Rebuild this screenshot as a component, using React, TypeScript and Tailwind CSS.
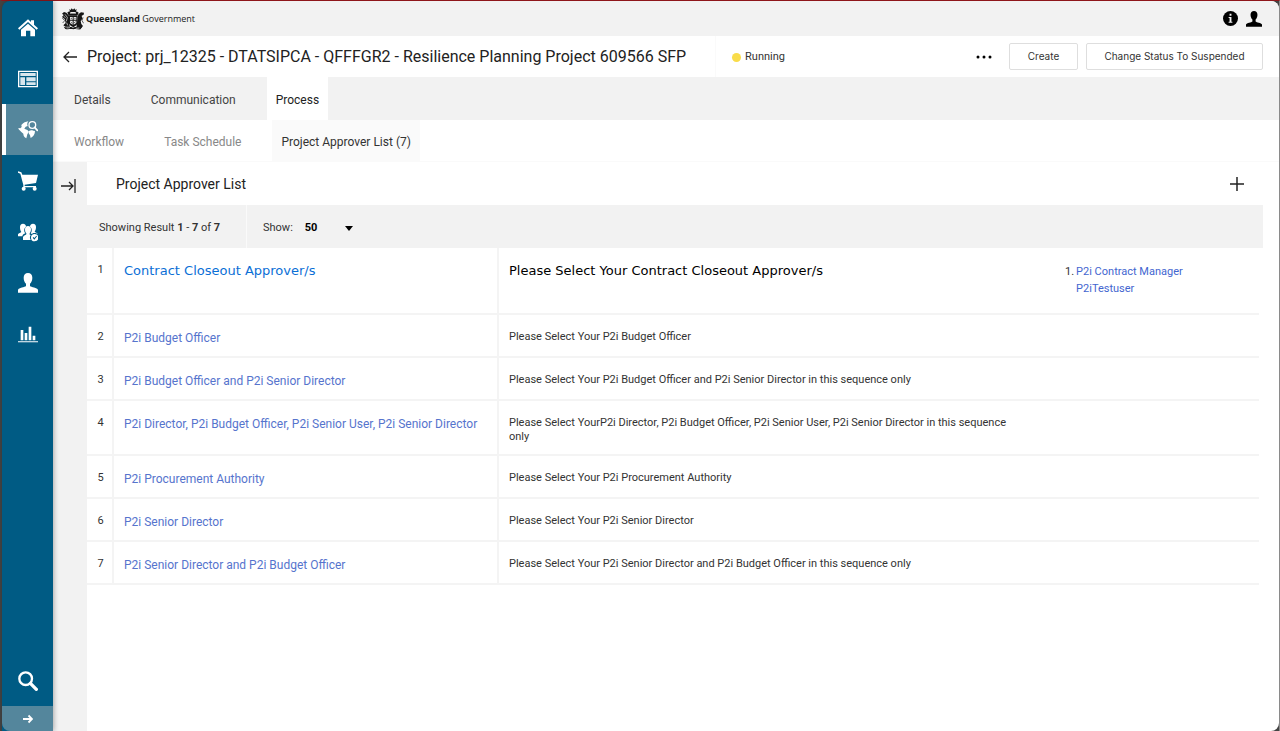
import { useState } from 'react';
import type { ReactNode } from 'react';

type Approver = {
  name: string;
  description: string;
  members?: string[];
};

const approvers: Approver[] = [
  {
    name: 'Contract Closeout Approver/s',
    description: 'Please Select Your Contract Closeout Approver/s',
    members: ['P2i Contract Manager', 'P2iTestuser'],
  },
  { name: 'P2i Budget Officer', description: 'Please Select Your P2i Budget Officer' },
  {
    name: 'P2i Budget Officer and P2i Senior Director',
    description: 'Please Select Your P2i Budget Officer and P2i Senior Director in this sequence only',
  },
  {
    name: 'P2i Director, P2i Budget Officer, P2i Senior User, P2i Senior Director',
    description:
      'Please Select YourP2i Director, P2i Budget Officer, P2i Senior User, P2i Senior Director in this sequence only',
  },
  { name: 'P2i Procurement Authority', description: 'Please Select Your P2i Procurement Authority' },
  { name: 'P2i Senior Director', description: 'Please Select Your P2i Senior Director' },
  {
    name: 'P2i Senior Director and P2i Budget Officer',
    description: 'Please Select Your P2i Senior Director and P2i Budget Officer in this sequence only',
  },
];

function Glyph({ children }: { children: ReactNode }) {
  return (
    <svg viewBox="0 0 60 60" className="size-5" fill="currentColor" aria-hidden="true">
      {children}
    </svg>
  );
}

function PersonShape() {
  return (
    <path d="M30 0c8 0 13 6 13 14 0 8-3 14-7 18v7c3 4 22 4 24 12v8H0v-8c2-8 21-8 24-12v-7c-4-4-7-10-7-18C17 6 22 0 30 0z" />
  );
}

const navItems = [
  {
    label: 'Home',
    icon: (
      <Glyph>
        <path d="M30 4l9 8V7h9v13l12 11-4 4L30 12 4 35l-4-4z" />
        <path d="M30 17l21 18v20H37V38H24v17H9V35z" />
      </Glyph>
    ),
  },
  {
    label: 'Dashboard',
    icon: (
      <Glyph>
        <path fillRule="evenodd" d="M0 5h60v50H0zM4 9v42h52V9z" />
        <path d="M7 12h46v9H7zM7 25h14v23H7zM25 25h28v12H25zM25 40h28v8H25z" opacity="0.85" />
      </Glyph>
    ),
  },
  {
    label: 'Projects',
    icon: (
      <Glyph>
        <path d="M10 15C16 8 23 5 31 4c-4 5-4 9-2 14l-6 2-4 6 9 4 5 5-5 8-3 12c-6-3-9-8-9-14l-6-5-8-8-1-4 6 1 4-4z" />
        <path d="M33 33c5-3 8-3 13-1l5 1c0 10-5 17-13 21l-2-8-4-6z" />
        <circle cx="43" cy="15" r="10" fill="none" stroke="currentColor" strokeWidth="4" />
        <path d="M50 22l8 9" stroke="currentColor" strokeWidth="5" strokeLinecap="round" />
      </Glyph>
    ),
  },
  {
    label: 'Cart',
    icon: (
      <Glyph>
        <path d="M0 1l10 3 3 7h47l-6 25-34 5v4h34v4H16v-7L7 8 0 5z" />
        <circle cx="17" cy="53" r="6" />
        <circle cx="50" cy="53" r="6" />
      </Glyph>
    ),
  },
  {
    label: 'Teams',
    icon: (
      <Glyph>
        <path d="M15 5c6 0 9 4 9 9-6 3-7 14-2 20-4 2-8 3-9 9H0v-6c2-4 8-4 10-7-3-4-4-9-4-15 0-6 3-10 9-10zM45 5c6 0 9 4 9 10 0 5-1 10-4 14 2 3 8 3 10 8l-7-4c-6-1-9 0-12 3l-3-2c5-6 4-17-2-20 0-5 3-9 9-9z" />
        <path d="M30 12c6 0 9 4 9 10 0 6-2 9-4 12v4l3 1c-3 5-3 10 0 15H15v-9c2-5 9-5 10-8v-3c-3-3-4-6-4-12 0-6 3-10 9-10z" />
        <path fillRule="evenodd" d="M50 36a11 11 0 100 22 11 11 0 000-22zm-6 11l3-2 2 3 6-7 2 2-8 10z" />
      </Glyph>
    ),
  },
  {
    label: 'Contacts',
    icon: (
      <Glyph>
        <PersonShape />
      </Glyph>
    ),
  },
  {
    label: 'Reports',
    icon: (
      <Glyph>
        <path d="M0 52h60v3H0zM8 18h8v31H8zM20 27h8v22h-8zM32 8h8v41h-8zM44 35h8v14h-8z" />
      </Glyph>
    ),
  },
];

function Crest() {
  return (
    <svg viewBox="0 0 66 66" className="size-[22px]" aria-hidden="true">
      <g fill="#161616">
        <path d="M22 3l4 3 3-5 4 4 4-4 3 5 4-3-2 9H24z" />
        <path d="M16 13l7-3 3 5h14l4-5 6 4-4 9H20z" />
        <path d="M0 17l6-5 7 2 6 7 3 5-1 22 3 8H10l-6-4 7-7-3-12-8-6 5-6z" />
        <path d="M47 29l2-10 8-6 9 1-1 6-6 3 2 9-5 7 2 9 5 6-5 6H43z" />
        <path fillRule="evenodd" d="M20 23h27v20c0 8-7 11-13 15-7-4-14-7-14-15zm4 4v8h8v-8zm11 0v8h8v-8zm-11 11v7l8 5V38zm11 0v12l8-5v-7z" />
        <path d="M5 56c10 4 18-1 28 3 10-4 17 0 27-3l-4 8c-8 1-14-2-22 0-9-2-15 1-24-1z" />
      </g>
      <g fill="none" stroke="#161616" strokeWidth="2">
        <path d="M26 31h4M37 31h4M26 42l5 4M36 45l5-4M1 30l7 8-6 7M63 28l-3 10 5 8" />
      </g>
      <g fill="none" stroke="#f2f2f2" strokeWidth="2">
        <path d="M24 16h18M9 19l7 9-3 12M5 25l6 4M14 60l10-1M41 61l11-1M14 44l3 8" />
      </g>
    </svg>
  );
}

function Sidebar() {
  const [active, setActive] = useState('Projects');

  return (
    <nav
      aria-label="Main"
      className="relative z-10 flex w-[51px] shrink-0 flex-col rounded-tl-lg bg-[#005b84] pt-px text-white shadow-[1px_0_5px_rgba(0,0,0,0.3)]"
    >
      {navItems.map(item => (
        <button
          key={item.label}
          aria-label={item.label}
          onClick={() => setActive(item.label)}
          className={
            active === item.label
              ? 'flex h-[51px] items-center justify-center border-l-4 border-white bg-[#54869c] pr-1'
              : 'flex h-[51px] items-center justify-center'
          }
        >
          {item.icon}
        </button>
      ))}
      <button aria-label="Search" className="mt-auto flex h-[51px] items-center justify-center">
        <svg viewBox="0 0 60 60" className="size-5" fill="none" stroke="currentColor" aria-hidden="true">
          <circle cx="23" cy="23" r="19" strokeWidth="7" />
          <path d="M38 38l17 17" strokeWidth="10" strokeLinecap="round" />
        </svg>
      </button>
      <button aria-label="Expand menu" className="flex h-[25px] items-center justify-center rounded-bl-lg bg-[#54869c]">
        <svg viewBox="0 0 10 10" className="size-[10px]" fill="none" stroke="currentColor" strokeWidth="1.8" aria-hidden="true">
          <path d="M0 5h9M5.500 1.500L9 5 5.500 8.500" />
        </svg>
      </button>
    </nav>
  );
}

function TopBar() {
  return (
    <header className="flex h-[35px] items-center justify-between bg-[#f2f2f2] pr-[17px] pl-[9px]">
      <div className="flex items-center gap-0.5 text-[#1a1a1a]">
        <Crest />
        <p className="font-['Open_Sans'] text-[9px]">
          <b>Queensland</b> Government
        </p>
      </div>
      <div className="flex items-center gap-2 text-black">
        <button aria-label="Information">
          <svg viewBox="0 0 16 16" className="size-[15px]" aria-hidden="true">
            <circle cx="8" cy="8" r="8" fill="currentColor" />
            <path d="M7 3h2v2H7zM6 6.500h3v5h1v1H6v-1h1v-4H6z" fill="#f2f2f2" />
          </svg>
        </button>
        <button aria-label="Account">
          <svg viewBox="0 0 60 60" className="size-4" fill="currentColor" aria-hidden="true">
            <PersonShape />
          </svg>
        </button>
      </div>
    </header>
  );
}

function TitleBar() {
  return (
    <div className="flex h-[41px] items-center bg-white pr-4 pl-[10px]">
      <button aria-label="Back" className="mr-[10px]">
        <svg viewBox="0 0 14 12" className="h-3 w-[14px]" fill="none" stroke="#222" strokeWidth="1.3" aria-hidden="true">
          <path d="M14 6H1M6 1L1 6l5 5" />
        </svg>
      </button>
      <h1 className="text-base text-[#222]">
        Project: prj_12325 - DTATSIPCA - QFFFGR2 - Resilience Planning Project 609566 SFP
      </h1>
      <div className="ml-[29px] flex h-full items-center gap-1 border-l border-[#fafafa] pt-0.5 pl-4 text-[11px] text-[#333]">
        <span className="size-[9px] rounded-full bg-[#f9dc4a]" />
        Running
      </div>
      <div className="ml-auto flex items-center gap-2 font-[Inter] text-[10px] text-[#333]">
        <button aria-label="More actions" className="mr-2 text-black">
          <svg viewBox="0 0 18 4" className="h-1 w-[18px]" fill="currentColor" aria-hidden="true">
            <circle cx="3" cy="2" r="1.500" />
            <circle cx="9" cy="2" r="1.500" />
            <circle cx="15" cy="2" r="1.500" />
          </svg>
        </button>
        <button className="h-[27px] w-[69px] rounded-xs border border-[#dedede]">Create</button>
        <button className="h-[27px] w-[177px] rounded-xs border border-[#dedede]">Change Status To Suspended</button>
      </div>
    </div>
  );
}

function Tabs() {
  return (
    <>
      <nav aria-label="Project sections" className="flex h-[43px] gap-[22px] bg-[#f2f2f2] pl-3 text-xs text-[#444]">
        <a href="#details" className="flex items-center px-[9px] pt-0.5">Details</a>
        <a href="#communication" className="flex items-center px-[9px] pt-0.5">Communication</a>
        <a href="#process" aria-current="page" className="flex items-center bg-white px-[9px] pt-0.5 text-[#222]">Process</a>
      </nav>
      <nav aria-label="Process sections" className="flex h-[42px] gap-[22px] border-b border-[#fafafa] bg-white pl-3 text-xs text-[#888]">
        <a href="#workflow" className="flex items-center px-[9px] pt-0.5">Workflow</a>
        <a href="#task-schedule" className="flex items-center px-[9px] pt-0.5">Task Schedule</a>
        <a href="#approvers" aria-current="page" className="flex items-center bg-[#fafafa] px-[9px] pt-0.5 text-[#333]">
          Project Approver List (7)
        </a>
      </nav>
    </>
  );
}

function ApproverTable() {
  return (
    <table className="w-full table-fixed border-collapse text-left text-[11px] leading-[14px] text-[#333]">
      <colgroup>
        <col className="w-[26px]" />
        <col className="w-[385px]" />
        <col />
        <col className="w-[204px]" />
      </colgroup>
      <tbody>
        {approvers.map((row, i) => {
          const assigned = Boolean(row.members);
          return (
            <tr
              key={row.name}
              className={assigned ? 'h-[66px] border-b-2 border-[#f4f4f4] align-top' : 'h-[43px] border-b-2 border-[#f4f4f4] align-top'}
            >
              <td className="border-r-2 border-[#f4f4f4] pt-[15px] pl-0.5 text-center">{i + 1}</td>
              <td className="border-r-2 border-[#f4f4f4] px-[10px] pt-4">
                <a
                  href={`#approver-${i + 1}`}
                  className={assigned ? "font-['DejaVu_Sans'] text-[13px] text-[#0b6fd6]" : 'text-xs leading-[14px] text-[#5674cd]'}
                >
                  {row.name}
                </a>
              </td>
              <td className={assigned ? "px-[10px] pt-4 font-['DejaVu_Sans'] text-[13px] text-black" : 'pt-[15px] pr-[30px] pb-[10px] pl-[10px]'}>
                {row.description}
              </td>
              <td className="px-[10px] pt-[15px]">
                {row.members && (
                  <ol className="flex gap-0.5 leading-[17px]">
                    <li>1.</li>
                    <li className="flex flex-col">
                      {row.members.map(member => (
                        <a key={member} href="#member" className="text-[#4366d0]">
                          {member}
                        </a>
                      ))}
                    </li>
                  </ol>
                )}
              </td>
            </tr>
          );
        })}
      </tbody>
    </table>
  );
}

export default function App() {
  const [pageSize, setPageSize] = useState('50');

  return (
    <div className="flex min-h-screen border-t border-r border-l-2 border-t-[#8f161b] border-r-[#8a8a8a] border-l-[#444] bg-[#444] font-[Roboto,sans-serif]">
      <Sidebar />
      <div className="flex min-w-0 flex-1 flex-col overflow-hidden rounded-r-lg bg-white">
        <TopBar />
        <TitleBar />
        <Tabs />
        <div className="flex flex-1">
          <aside className="flex w-[34px] shrink-0 bg-[#f2f2f2] pt-4 pl-2">
            <button aria-label="Open panel" className="self-start">
              <svg viewBox="0 0 16 16" className="size-4" fill="none" stroke="#222" strokeWidth="1.300" aria-hidden="true">
                <path d="M0 8h12M8 4l4 4-4 4M14 1v14" />
              </svg>
            </button>
          </aside>
          <main className="flex-1 pr-4">
            <div className="flex h-[43px] items-center justify-between pr-[19px] pl-[29px]">
              <h2 className="text-sm text-[#222]">Project Approver List</h2>
              <button aria-label="Add approver list">
                <svg viewBox="0 0 14 14" className="size-[14px]" stroke="#222" strokeWidth="1.500" aria-hidden="true">
                  <path d="M7 0v14M0 7h14" />
                </svg>
              </button>
            </div>
            <div className="flex h-[43px] items-center bg-[#f2f2f2] text-[11px] text-[#333]">
              <p className="flex h-full w-[160px] items-center border-r border-[#fafafa] pt-1 pl-3">
                <span>
                  Showing Result <b>1</b> - <b>7</b> of <b>7</b>
                </span>
              </p>
              <label htmlFor="page-size" className="pt-1 pl-4">Show:</label>
              <div className="ml-3 grid items-center pt-1">
                <select
                  id="page-size"
                  value={pageSize}
                  onChange={e => setPageSize(e.target.value)}
                  className="col-start-1 row-start-1 w-12 appearance-none bg-transparent font-bold text-black"
                >
                  <option>10</option>
                  <option>20</option>
                  <option>50</option>
                </select>
                <svg viewBox="0 0 8 5" className="pointer-events-none col-start-1 row-start-1 h-[5px] w-2 justify-self-end" aria-hidden="true">
                  <path d="M0 0h8L4 5z" />
                </svg>
              </div>
            </div>
            <div className="pr-1">
              <ApproverTable />
            </div>
          </main>
        </div>
      </div>
    </div>
  );
}
